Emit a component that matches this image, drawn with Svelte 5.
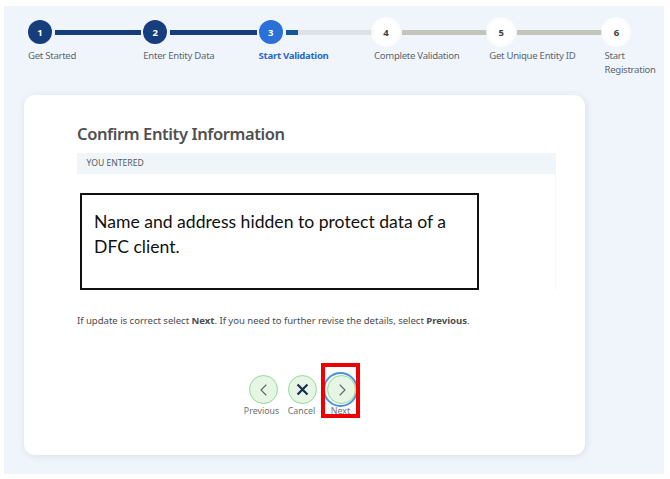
<script lang="ts">
	const steps = [
		{ n: 1, label: 'Get Started', state: 'done' },
		{ n: 2, label: 'Enter Entity Data', state: 'done' },
		{ n: 3, label: 'Start Validation', state: 'current' },
		{ n: 4, label: 'Complete Validation', state: 'todo' },
		{ n: 5, label: 'Get Unique Entity ID', state: 'todo' },
		{ n: 6, label: 'Start Registration', state: 'todo' }
	];
</script>

<main class="panel">
	<ol class="steps">
		{#each steps as step, i}
			<li class="step step--{step.state}">
				<div class="step__track">
					<span class="step__dot">{step.n}</span>
					{#if i < steps.length - 1}<span class="step__line"></span>{/if}
				</div>
				<span class="step__label">{step.label}</span>
			</li>
		{/each}
	</ol>

	<section class="card">
		<h1 class="title">Confirm Entity Information</h1>
		<div class="entered">YOU ENTERED</div>
		<div class="fields">
			<div class="hidden-note">Name and address hidden to protect data of a DFC client.</div>
		</div>
		<p class="hint">
			If update is correct select <b>Next</b>. If you need to further revise the details, select
			<b>Previous</b>.
		</p>

		<div class="actions">
			<button class="action action--prev">
				<span class="action__icon">
					<svg viewBox="0 0 24 24" width="18" height="18" fill="none" stroke="#5c6670" stroke-width="1.5">
						<path d="M15 5l-7 7 7 7" />
					</svg>
				</span>
				<span class="action__label">Previous</span>
			</button>
			<button class="action">
				<span class="action__icon">
					<svg viewBox="0 0 24 24" width="17" height="17" fill="none" stroke="#1b2f55" stroke-width="3.2">
						<path d="M5 5l14 14M19 5L5 19" />
					</svg>
				</span>
				<span class="action__label">Cancel</span>
			</button>
			<button class="action">
				<span class="ring"></span>
				<span class="action__icon">
					<svg viewBox="0 0 24 24" width="18" height="18" fill="none" stroke="#5c6670" stroke-width="1.5">
						<path d="M9 5l7 7-7 7" />
					</svg>
				</span>
				<span class="action__label">Next</span>
				<span class="callout"></span>
			</button>
		</div>
	</section>
</main>

<style>
	:global(body) {
		background: #fff;
		font-family: 'Noto Sans', sans-serif;
	}
	.panel {
		box-sizing: border-box;
		width: 660px;
		height: 468px;
		margin: 6px 0 0 4px;
		padding: 14px 0 0 24px;
		background: #f0f5fb;
		overflow: hidden;
	}
	.steps {
		list-style: none;
		margin: 0;
		padding: 0;
		display: flex;
	}
	.step {
		flex: 0 0 115.3px;
		min-width: 0;
	}
	.step__track {
		display: flex;
		align-items: center;
		height: 24px;
	}
	.step__dot {
		flex: 0 0 24px;
		height: 24px;
		border-radius: 50%;
		display: flex;
		align-items: center;
		justify-content: center;
		font-size: 9.5px;
		font-weight: 700;
		color: #fff;
		background: #173e7c;
	}
	.step__line {
		flex: 1;
		height: 5px;
		margin: 0 2px 0 3px;
		background: #173e7c;
	}
	.step--current .step__dot {
		background: #2970d8;
	}
	.step--current .step__line {
		background: linear-gradient(90deg, #15569a 0 12px, #dde1e6 12px);
		margin-right: 0;
	}
	.step--todo .step__dot {
		color: #3a3f45;
		background: #fff;
		box-shadow: 0 0 0 3px rgba(255, 255, 255, 0.7);
	}
	.step--todo .step__line {
		background: #c2c6ba;
		margin-left: 4px;
	}
	.step__label {
		display: block;
		margin-top: 5px;
		font-size: 9.6px;
		line-height: 13.5px;
		letter-spacing: -0.28px;
		color: #5f6570;
	}
	.step:last-child .step__label {
		width: 56px;
	}
	.step--current .step__label {
		color: #2969c4;
		font-weight: 700;
		letter-spacing: -0.3px;
	}
	.card {
		box-sizing: border-box;
		width: 561px;
		height: 360px;
		margin: 19px 0 0 -4px;
		padding: 28px 29px 0 53px;
		background: #fff;
		border-radius: 11px;
		box-shadow: 1px 1px 7px rgba(90, 110, 140, 0.16);
		color: #4b4d50;
	}
	.title {
		margin: 0;
		font-size: 16.5px;
		line-height: 22px;
		font-weight: 600;
		letter-spacing: -0.4px;
		color: #505050;
	}
	.entered {
		margin-top: 8px;
		height: 21px;
		padding-left: 9.5px;
		background: #f0f5fa;
		font-size: 8.6px;
		line-height: 21px;
		color: #555a60;
	}
	.fields {
		height: 116px;
		padding: 19px 0 0 3px;
		box-sizing: border-box;
		border-right: 1px solid #f7f8f9;
	}
	.hidden-note {
		box-sizing: border-box;
		width: 399px;
		height: 97px;
		padding: 15px 12px 0 12px;
		border: 2px solid #111;
		font-family: 'Lato', sans-serif;
		font-size: 17.6px;
		line-height: 24.5px;
		color: #111;
	}
	.hint {
		margin: 24px 0 0;
		font-size: 9.6px;
		line-height: 14px;
		letter-spacing: -0.04px;
		color: #4b4d50;
	}
	.actions {
		display: flex;
		justify-content: center;
		gap: 9px;
		margin: 47px 0 0 -1px;
		padding-right: 27px;
	}
	.action {
		position: relative;
		width: 30px;
		padding: 0;
		border: 0;
		background: none;
		display: flex;
		flex-direction: column;
		align-items: center;
		font: inherit;
		font-size: 8.8px;
		line-height: 12px;
		color: #6b6e72;
		white-space: nowrap;
	}
	.action__label {
		margin-right: 2px;
	}
	.action--prev .action__label {
		margin-right: 4px;
	}
	.action__icon {
		box-sizing: border-box;
		width: 29px;
		height: 29px;
		margin-bottom: 1px;
		border-radius: 50%;
		border: 1.3px solid #8fdc96;
		background: #e6f5e4;
		display: flex;
		align-items: center;
		justify-content: center;
	}
	.ring {
		position: absolute;
		top: -3.5px;
		left: -3.5px;
		width: 35px;
		height: 35px;
		box-sizing: border-box;
		border: 2.5px solid #4a90e2;
		border-radius: 50%;
	}
	.callout {
		position: absolute;
		top: -12px;
		left: -6px;
		width: 39px;
		height: 55px;
		box-sizing: border-box;
		border: 4px solid #ee0000;
	}
</style>
